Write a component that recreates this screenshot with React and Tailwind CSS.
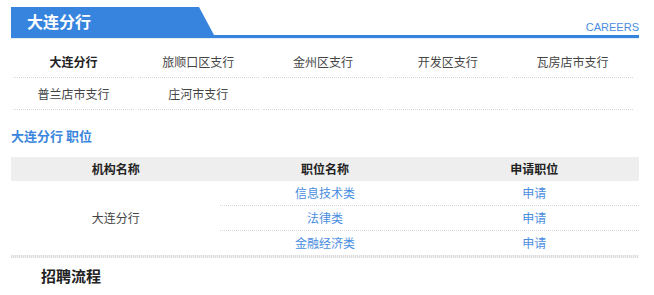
import React from "react";

const branches = ["大连分行", "旅顺口区支行", "金州区支行", "开发区支行", "瓦房店市支行", "普兰店市支行", "庄河市支行"];
const jobs = ["信息技术类", "法律类", "金融经济类"];

export default function App() {
  return (
    <div className="w-[654px] h-[295px] bg-white overflow-hidden pt-[7px] pl-[11px] font-['Noto_Sans_CJK_SC',sans-serif]">
      <div className="w-[628px]">
        <div className="flex items-end justify-between border-b-[3px] border-[#3784df]">
          <div className="h-[28px] w-[203px] bg-[#3784df] [clip-path:polygon(0_0,188px_0,203px_100%,0_100%)] flex items-center pl-[16px] text-white text-[16px] font-bold leading-none">
            大连分行
          </div>
          <div className="pb-[2px] text-[11px] leading-none text-[#4a8de0] font-['Liberation_Sans',sans-serif]">CAREERS</div>
        </div>
        <div className="h-px bg-[#e3ecf7]" />

        <div className="grid grid-cols-5 w-[624px] mt-[7px]">
          {branches.map((b, i) => (
            <div
              key={b}
              className={`mx-[2px] h-[32px] flex items-center justify-center border-b border-dotted border-[#d8d8d8] text-[12px] ${i === 0 ? "font-bold text-[#222]" : "text-[#444]"}`}
            >
              {b}
            </div>
          ))}
          {[0, 1, 2].map((k) => (
            <div key={k} className="mx-[2px] h-[32px] border-b border-dotted border-[#d8d8d8]" />
          ))}
        </div>

        <div className="mt-[19px] text-[13px] font-bold text-[#3b86dc] leading-none">大连分行 职位</div>

        <div className="mt-[15px]">
          <div className="grid grid-cols-3 h-[24px] bg-[#eeeeee] text-[12px] font-bold text-[#222] items-center text-center">
            <div>机构名称</div>
            <div>职位名称</div>
            <div>申请职位</div>
          </div>
          <div className="flex">
            <div className="w-1/3 flex items-center justify-center text-[12px] text-[#444]">大连分行</div>
            <div className="w-2/3">
              {jobs.map((j, i) => (
                <div
                  key={j}
                  className={`grid grid-cols-2 items-center text-center text-[12px] text-[#4a8de0] ${i < 2 ? "border-b border-dotted border-[#d8d8d8] h-[25px]" : "h-[24px]"}`}
                >
                  <div>{j}</div>
                  <div>申请</div>
                </div>
              ))}
            </div>
          </div>
          <div className="h-[3px] bg-[repeating-linear-gradient(90deg,#dcdcdc_0px,#dcdcdc_1px,#f2f2f2_1px,#f2f2f2_2px)]" />
        </div>

        <div className="mt-[10px] pl-[30px] text-[15px] font-bold text-[#222] leading-none">招聘流程</div>
      </div>
    </div>
  );
}
